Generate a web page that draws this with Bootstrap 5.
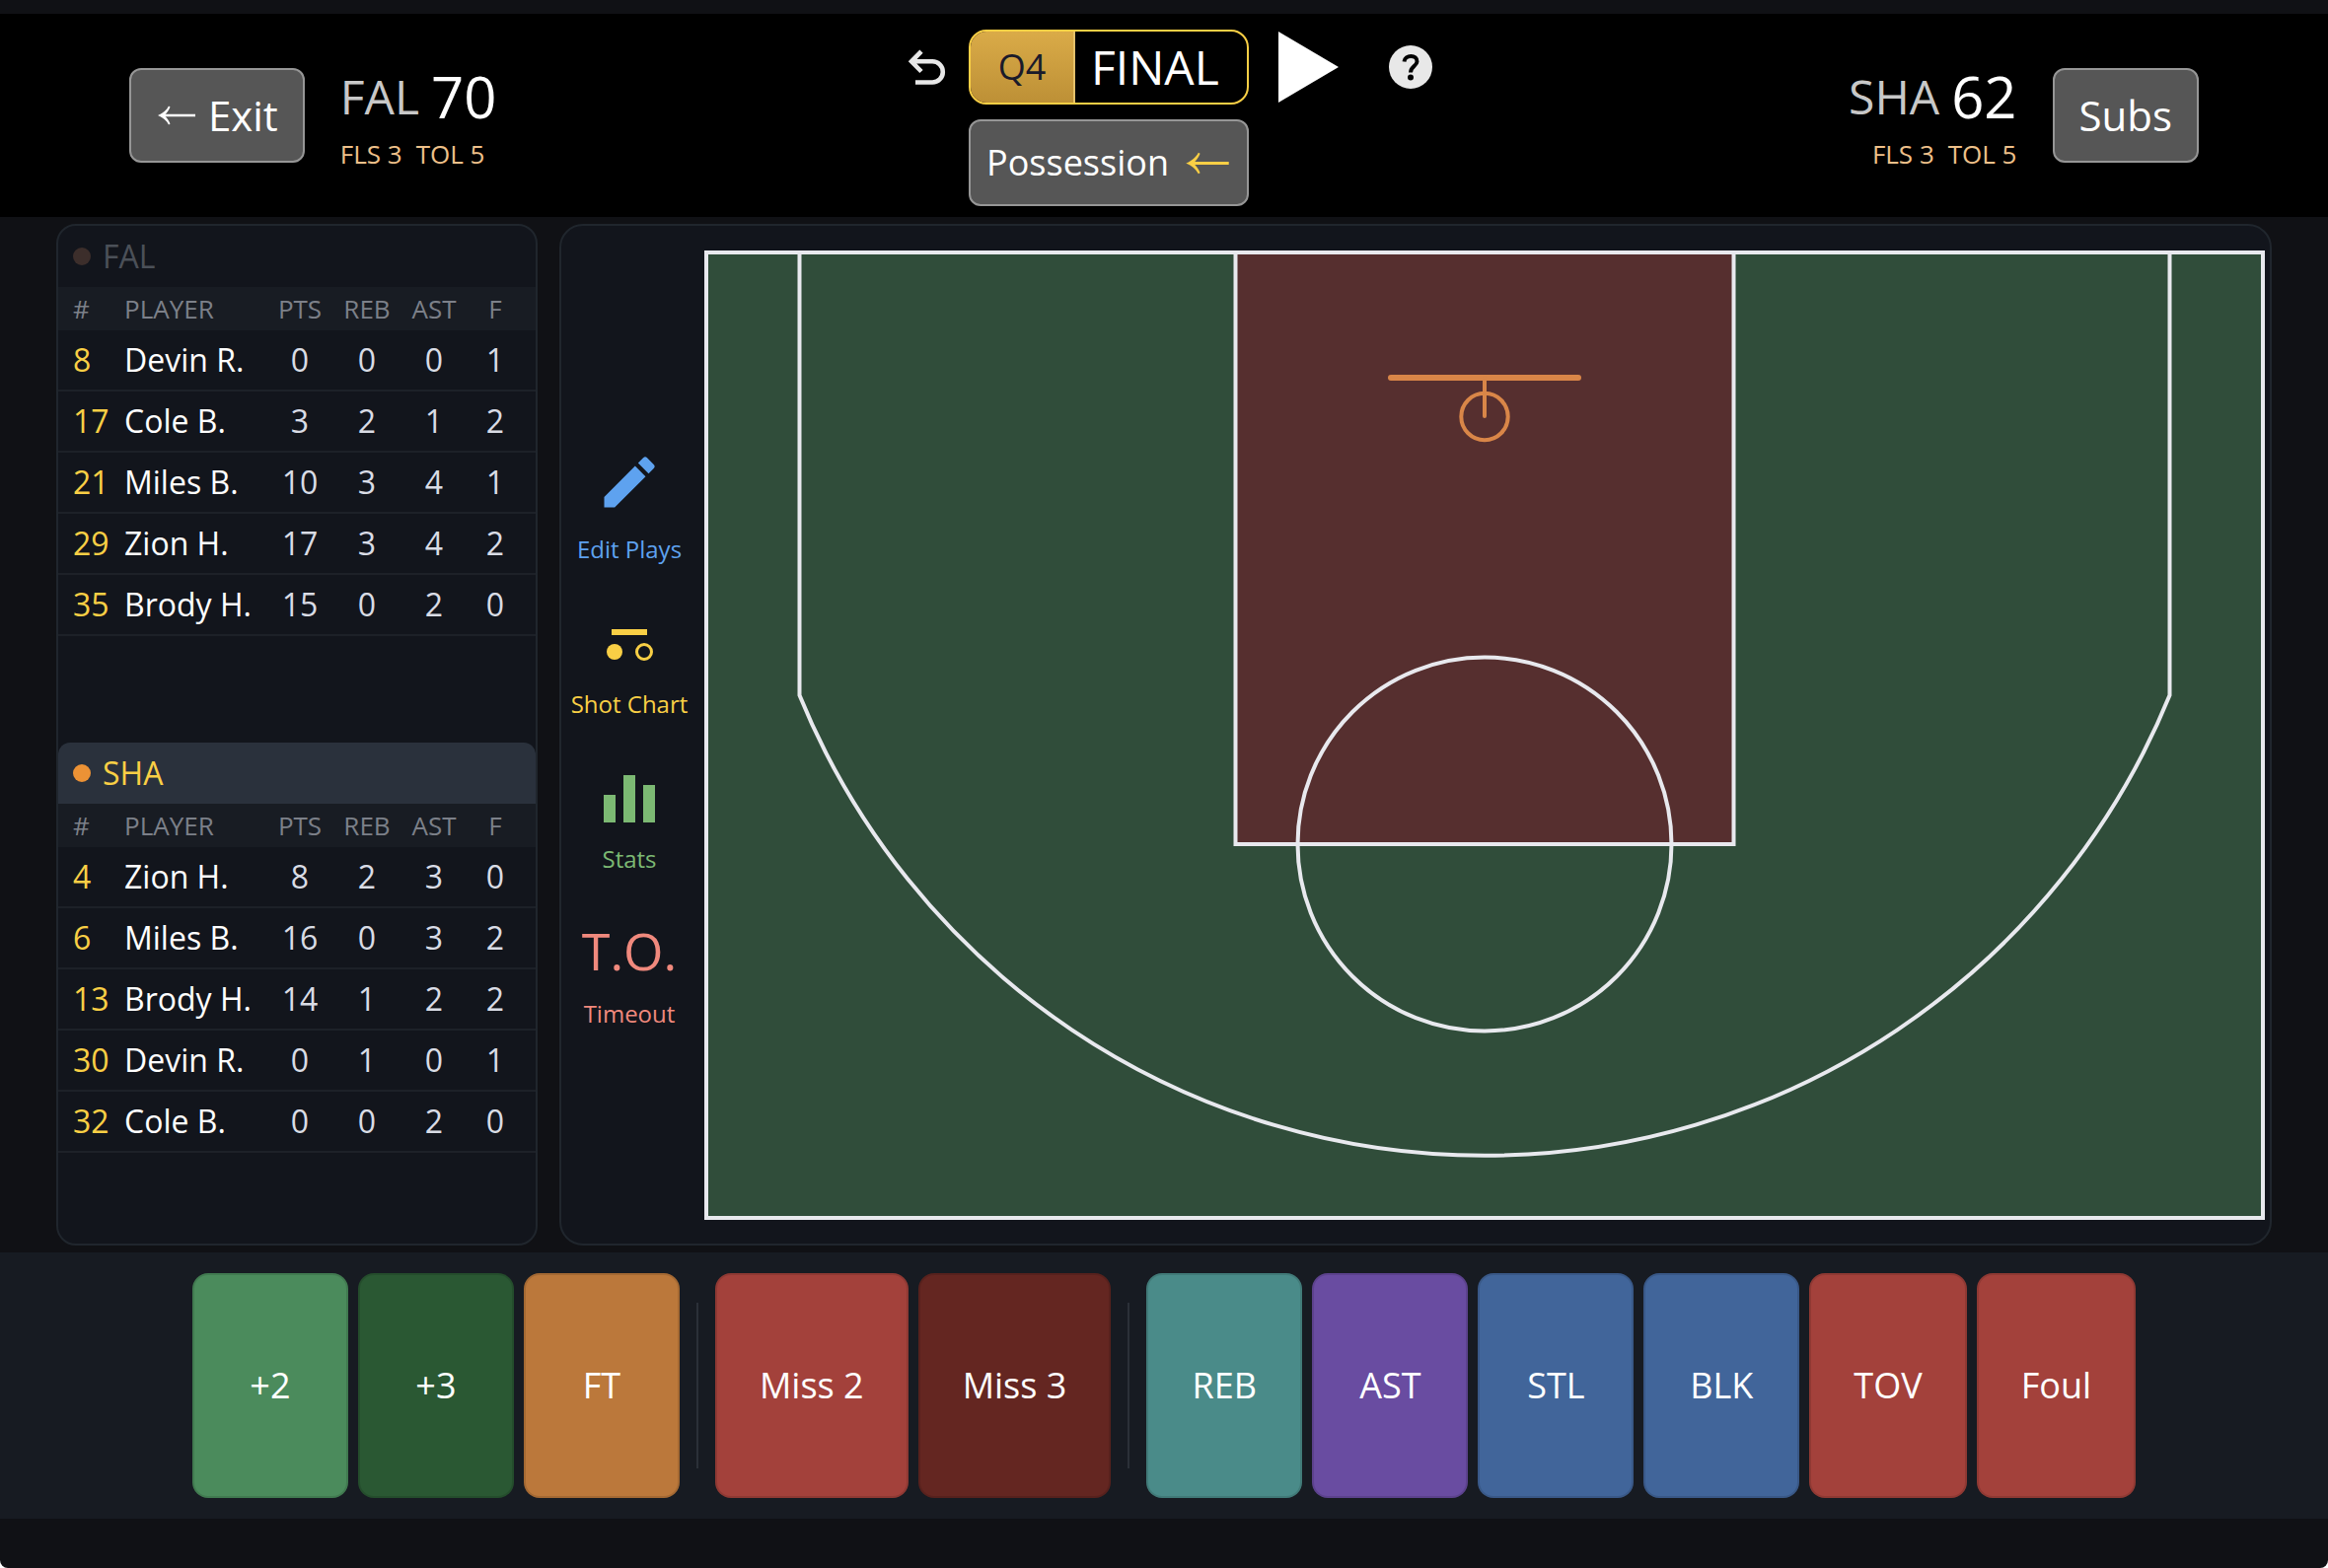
<!DOCTYPE html>
<html lang="en">
<head>
<meta charset="utf-8">
<meta name="viewport" content="width=device-width, initial-scale=1">
<title>FAL vs SHA – Scorekeeper</title>
<link href="https://cdn.jsdelivr.net/npm/bootstrap@5.3.0/dist/css/bootstrap.min.css" rel="stylesheet">
<style>
  :root { --gold: #f9cf45; --panel: #12151c; --line: #20262d; }
  body { background: #fff; font-family: "Open Sans", "Noto Sans", "Liberation Sans", sans-serif; color: #fff; }
  button { font-family: inherit; }
  .app { min-height: 100vh; background: #101115; border-radius: 0 0 8px 8px; padding: 14px 0 50px; }

  /* Scoreboard */
  .scorebar { background: #000; padding: 16px 131px 11px; }
  .scorebar .side { flex: 1 1 0; gap: 36px; padding-bottom: 5px; }
  .btn-grey { --bs-btn-color: #fff; --bs-btn-bg: #565656; --bs-btn-border-color: #969696; --bs-btn-hover-color: #fff; --bs-btn-hover-bg: #666; --bs-btn-hover-border-color: #aaa;
    --bs-btn-border-width: 2px; --bs-btn-border-radius: 12px; --bs-btn-padding-x: 25px; --bs-btn-font-size: 42px; height: 96px; line-height: 1; }
  .arrow-exit { width: 42px; height: 20px; vertical-align: 6px; }
  .arrow-poss { width: 48px; height: 23px; color: var(--gold); }
  .team-line { gap: 12px; line-height: 76px; }
  .team-abbr { font-size: 48px; color: #c8c8c8; }
  .team-pts { font-size: 58px; }
  .team-sub { font-size: 26px; line-height: 36px; margin-top: 2px; color: #eec08a; gap: 14px; }
  .center-grid { display: grid; grid-template-columns: 60px 284px 76px 81px; gap: 15px; align-items: center; }
  .center-grid .play { margin-left: 15px; }
  .center-grid .help { margin-left: 36px; }
  .iconbtn { border: 0; background: none; padding: 0; display: block; line-height: 0; text-align: left; }
  .clock { height: 76px; border: 2px solid var(--gold); border-radius: 18px; overflow: hidden; }
  .clock .period { width: 106px; background: linear-gradient(#daab48, #bd9036); color: #1a1a2a; font-size: 36px; border: 0; border-right: 2px solid #e4c06a; }
  .clock .time { font-size: 48px; line-height: 72px; padding-left: 16px; }
  .poss { grid-column: 2; height: 88px; --bs-btn-font-size: 36px; --bs-btn-padding-x: 16px; }

  /* Box score and court */
  .stage { padding: 7px 57px; gap: 22px; }
  .panel { background: var(--panel); border: 2px solid var(--line); }
  .roster { width: 488px; flex: none; border-radius: 20px; gap: 16px; overflow: hidden; }
  .team-head { width: 100%; height: 62px; font-size: 32px; line-height: 62px; padding: 0 15px; gap: 12px; border: 0; background: none; color: #4b5058; border-radius: 12px 12px 0 0; }
  .team-head.on { background: #2a313c; color: var(--gold); }
  .team-dot { width: 18px; height: 18px; border-radius: 50%; background: #3c2e2b; }
  .on .team-dot { background: #ec9235; }
  .stats { table-layout: fixed; width: 100%; border-collapse: separate; border-spacing: 0; text-align: center; }
  .stats th { height: 44px; background: #181c23; color: #7c8089; font-size: 26px; font-weight: 400; padding: 0; line-height: 1; }
  .stats td { height: 62px; font-size: 32px; padding: 0; line-height: 1; color: #d9dce5; border-bottom: 2px solid #1d2128; }
  .stats tr > :nth-child(1) { width: 67px; padding-left: 15px; text-align: left; }
  .stats tr > :nth-child(2) { text-align: left; white-space: nowrap; }
  .stats tr > :nth-child(n+3) { width: 68px; }
  .stats tr > :last-child { width: 69px; padding-right: 13px; }
  .stats td:nth-child(1) { color: var(--gold); }
  .stats td:nth-child(2) { color: #fff; }

  .play-area { border-radius: 24px; padding: 0 5px 0 0; }
  .tools { width: 145px; flex: none; gap: 35px; padding: 4px 7px 0 0; }
  .tool { border: 0; background: none; padding: 0; font-size: 24px; line-height: 32px; white-space: nowrap; color: inherit; }
  .tool .glyph { height: 72px; padding-top: 4px; margin-bottom: 18px; }
  .tool .glyph-text { font-size: 52px; line-height: 76px; }
  .tool svg { width: 68px; height: 68px; display: block; margin: 0 auto; }
  .tool.t-blue { color: #5ea2ef; } .tool.t-gold { color: var(--gold); } .tool.t-green { color: #7cb973; } .tool.t-coral { color: #f0897d; }
  .court { display: block; width: 100%; height: auto; }

  /* Action bar */
  .actions { background: #171b22; padding: 21px 0; gap: 10px; }
  .act { min-width: 158px; height: 228px; padding: 0 43px; border: 2px solid rgba(0,0,0,.12); border-radius: 16px; color: #fff; font-size: 36px; white-space: nowrap; }
  .split { width: 2px; height: 168px; margin: 0 7px; background: #2b3038; }
  .a-green { background-color: #4b8b5c; } .a-forest { background-color: #2a5833; } .a-amber { background-color: #bb783b; }
  .a-red { background-color: #a3413b; } .a-maroon { background-color: #642621; } .a-teal { background-color: #4a8b89; }
  .a-violet { background-color: #694ca1; } .a-blue { background-color: #41659a; }
</style>
</head>
<body>
<svg class="d-none" aria-hidden="true">
  <symbol id="arrow-left" viewBox="0 0 42 20"><path d="M5 10H40" fill="none" stroke="currentColor" stroke-width="2.500"/><path d="M2 10C7 8 11 4.500 13 .5L14.500 1.500C13 5 11 8 8.500 10 11 12 13 15 14.500 18.500L13 19.500C11 15.500 7 12 2 10Z" fill="currentColor"/></symbol>
</svg>
<div class="app d-flex flex-column">
  <header class="scorebar d-flex align-items-center">
    <div class="side d-flex align-items-center">
      <button class="btn btn-grey" type="button"><svg class="arrow-exit" aria-hidden="true"><use href="#arrow-left"/></svg> Exit</button>
      <div>
        <div class="team-line d-flex align-items-center"><span class="team-abbr">FAL</span><span class="team-pts">70</span></div>
        <div class="team-sub d-flex"><span>FLS 3</span><span>TOL 5</span></div>
      </div>
    </div>
    <div class="center-grid">
      <button class="iconbtn ps-2" type="button" aria-label="Undo">
        <svg width="44" height="40" viewBox="0 0 44 40" fill="none" stroke="#e8e8e8" stroke-width="4.600"><path d="M19 4.200 9 14.300 19 24.500M9 14.300H30.200A10.600 10.600 0 0 1 30.200 35.500H13"/></svg>
      </button>
      <div class="clock d-flex">
        <button class="period p-0" type="button">Q4</button>
        <div class="time">FINAL</div>
      </div>
      <button class="iconbtn play" type="button" aria-label="Start clock">
        <svg width="61" height="72" viewBox="0 0 61 72"><path d="M0 0 61 36 0 72Z" fill="#fff"/></svg>
      </button>
      <button class="iconbtn help" type="button" aria-label="Help">
        <svg width="44" height="44" viewBox="0 0 44 44"><circle cx="22" cy="22" r="22" fill="#e8e8e8"/><path d="M15.500 16.500C16 9 29 9 28.500 16.500 28.300 21 22 21.500 22 27.500" fill="none" stroke="#000" stroke-width="4"/><circle cx="22" cy="32.500" r="3" fill="#000"/></svg>
      </button>
      <button class="btn btn-grey poss d-flex align-items-center justify-content-between" type="button">Possession <svg class="arrow-poss" aria-hidden="true"><use href="#arrow-left"/></svg></button>
    </div>
    <div class="side d-flex align-items-center justify-content-end">
      <div>
        <div class="team-line d-flex align-items-center justify-content-end"><span class="team-abbr">SHA</span><span class="team-pts">62</span></div>
        <div class="team-sub d-flex justify-content-end"><span>FLS 3</span><span>TOL 5</span></div>
      </div>
      <button class="btn btn-grey" type="button">Subs</button>
    </div>
  </header>

  <main class="stage d-flex flex-grow-1">
    <section class="panel roster d-flex flex-column">
      <div class="flex-fill" style="flex-basis:0">
        <button class="team-head d-flex align-items-center" type="button"><span class="team-dot"></span>FAL</button>
        <table class="stats">
          <thead><tr><th>#</th><th>PLAYER</th><th>PTS</th><th>REB</th><th>AST</th><th>F</th></tr></thead>
          <tbody>
            <tr><td>8</td><td>Devin R.</td><td>0</td><td>0</td><td>0</td><td>1</td></tr>
            <tr><td>17</td><td>Cole B.</td><td>3</td><td>2</td><td>1</td><td>2</td></tr>
            <tr><td>21</td><td>Miles B.</td><td>10</td><td>3</td><td>4</td><td>1</td></tr>
            <tr><td>29</td><td>Zion H.</td><td>17</td><td>3</td><td>4</td><td>2</td></tr>
            <tr><td>35</td><td>Brody H.</td><td>15</td><td>0</td><td>2</td><td>0</td></tr>
          </tbody>
        </table>
      </div>
      <div class="flex-fill" style="flex-basis:0">
        <button class="team-head on d-flex align-items-center" type="button"><span class="team-dot"></span>SHA</button>
        <table class="stats">
          <thead><tr><th>#</th><th>PLAYER</th><th>PTS</th><th>REB</th><th>AST</th><th>F</th></tr></thead>
          <tbody>
            <tr><td>4</td><td>Zion H.</td><td>8</td><td>2</td><td>3</td><td>0</td></tr>
            <tr><td>6</td><td>Miles B.</td><td>16</td><td>0</td><td>3</td><td>2</td></tr>
            <tr><td>13</td><td>Brody H.</td><td>14</td><td>1</td><td>2</td><td>2</td></tr>
            <tr><td>30</td><td>Devin R.</td><td>0</td><td>1</td><td>0</td><td>1</td></tr>
            <tr><td>32</td><td>Cole B.</td><td>0</td><td>0</td><td>2</td><td>0</td></tr>
          </tbody>
        </table>
      </div>
    </section>

    <section class="panel play-area flex-grow-1 d-flex align-items-center">
      <nav class="tools d-flex flex-column align-items-center" aria-label="Game tools">
        <button class="tool t-blue" type="button">
          <div class="glyph"><svg viewBox="0 0 24 24" fill="currentColor"><path d="M3 17.250V21h3.750L17.810 9.940l-3.750-3.750L3 17.250zM20.710 7.040a1 1 0 0 0 0-1.410l-2.340-2.340a1 1 0 0 0-1.410 0l-1.830 1.830 3.750 3.750 1.830-1.830z"/></svg></div>
          Edit Plays
        </button>
        <button class="tool t-gold" type="button">
          <div class="glyph"><svg viewBox="0 0 68 68"><path d="M16 26H52V32H16Z" fill="currentColor"/><circle cx="19" cy="49" r="8" fill="currentColor"/><circle cx="49" cy="49" r="7.500" fill="none" stroke="currentColor" stroke-width="3"/></svg></div>
          Shot Chart
        </button>
        <button class="tool t-green" type="button">
          <div class="glyph"><svg viewBox="0 0 68 68" fill="currentColor"><path d="M8 37H20V65H8ZM28 17H40V65H28ZM48 27H60V65H48Z"/></svg></div>
          Stats
        </button>
        <button class="tool t-coral" type="button">
          <div class="glyph glyph-text">T.O.</div>
          Timeout
        </button>
      </nav>
      <div class="flex-grow-1">
        <svg class="court" viewBox="0 0 1582 983" role="img" aria-label="Half court" fill="none" stroke="#e8e9ee" stroke-width="4">
          <rect x="2" y="2" width="1578" height="979" fill="#304d3a"/>
          <rect x="538.500" y="2" width="505" height="600" fill="#562f2f"/>
          <circle cx="791" cy="602" r="189.500"/>
          <path d="M96.500 2V451A750 750 0 0 0 1485.500 451V2"/>
          <g stroke="#d98648" stroke-linecap="round"><path d="M696 129H886" stroke-width="6"/><path d="M791 129V168"/><circle cx="791" cy="168.500" r="23.700"/></g>
        </svg>
      </div>
    </section>
  </main>

  <footer class="actions d-flex justify-content-center align-items-center">
    <button class="act a-green" type="button">+2</button>
    <button class="act a-forest" type="button">+3</button>
    <button class="act a-amber" type="button">FT</button>
    <div class="split"></div>
    <button class="act a-red" type="button">Miss 2</button>
    <button class="act a-maroon" type="button">Miss 3</button>
    <div class="split"></div>
    <button class="act a-teal" type="button">REB</button>
    <button class="act a-violet" type="button">AST</button>
    <button class="act a-blue" type="button">STL</button>
    <button class="act a-blue" type="button">BLK</button>
    <button class="act a-red" type="button">TOV</button>
    <button class="act a-red" type="button">Foul</button>
  </footer>
</div>
<script src="https://cdn.jsdelivr.net/npm/bootstrap@5.3.0/dist/js/bootstrap.bundle.min.js"></script>
</body>
</html>
